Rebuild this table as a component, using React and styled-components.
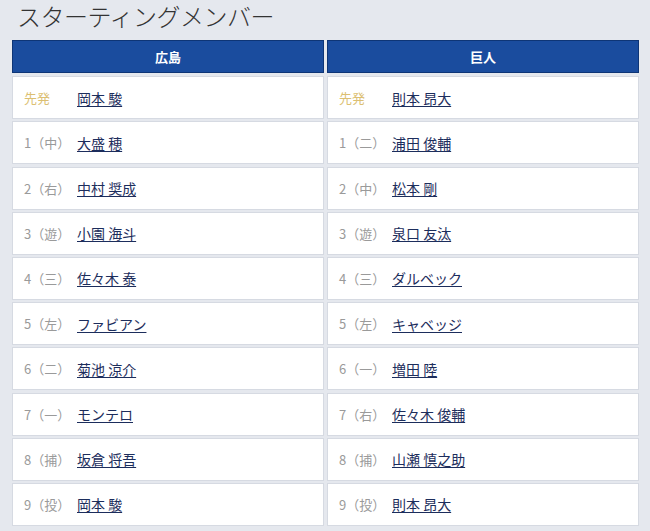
import React from 'react';
import styled, { createGlobalStyle } from 'styled-components';

const GlobalStyle = createGlobalStyle`
  body {
    margin: 0;
    background: #e5e8ee;
    font-family: "Noto Sans CJK JP", "Noto Sans", sans-serif;
  }
`

const Page = styled.div`
  width: 650px;
  height: 531px;
  overflow: hidden;
`

const Title = styled.h2`
  margin: 0;
  padding-left: 17px;
  height: 40px;
  line-height: 32px;
  font-size: 24px;
  font-weight: 300;
  color: #333;
  letter-spacing: -0.5px;
`

const Table = styled.div`
  margin-left: 12px;
  width: 627px;
  display: grid;
  grid-template-columns: 1fr 1fr;
  column-gap: 3px;
`

const Column = styled.div`
  display: flex;
  flex-direction: column;
  gap: 2.2px;
`

const Header = styled.div`
  height: 33px;
  margin-bottom: 1px;
  box-sizing: border-box;
  background: #1a4c9e;
  border: 1px solid #0e3576;
  color: #fff;
  font-size: 13px;
  font-weight: 700;
  display: flex;
  align-items: center;
  justify-content: center;
`

const Row = styled.div`
  height: 43px;
  box-sizing: border-box;
  background: #fff;
  border: 1px solid #d6dae2;
  display: flex;
  align-items: center;
  padding-left: 11px;
`

const Pos = styled.span`
  width: 53px;
  font-size: 13px;
  color: ${p => (p.starter ? '#dcbf72' : '#9a9a9a')};
`

const Name = styled.a`
  font-size: 14px;
  color: #1c2d5c;
  text-decoration: underline;
  text-underline-offset: 2px;
`

const teams = [
  {
    name: '広島',
    players: [
      ['先発', '岡本 駿'],
      ['1（中）', '大盛 穂'],
      ['2（右）', '中村 奨成'],
      ['3（遊）', '小園 海斗'],
      ['4（三）', '佐々木 泰'],
      ['5（左）', 'ファビアン'],
      ['6（二）', '菊池 涼介'],
      ['7（一）', 'モンテロ'],
      ['8（捕）', '坂倉 将吾'],
      ['9（投）', '岡本 駿'],
    ],
  },
  {
    name: '巨人',
    players: [
      ['先発', '則本 昂大'],
      ['1（二）', '浦田 俊輔'],
      ['2（中）', '松本 剛'],
      ['3（遊）', '泉口 友汰'],
      ['4（三）', 'ダルベック'],
      ['5（左）', 'キャベッジ'],
      ['6（一）', '増田 陸'],
      ['7（右）', '佐々木 俊輔'],
      ['8（捕）', '山瀬 慎之助'],
      ['9（投）', '則本 昂大'],
    ],
  },
]

const App = () => {
  return (
    <Page>
      <GlobalStyle />
      <Title>スターティングメンバー</Title>
      <Table>
        {teams.map((team) => (
          <Column key={team.name}>
            <Header>{team.name}</Header>
            {team.players.map(([pos, player], index) => (
              <Row key={`${team.name}${index}`}>
                <Pos starter={index === 0}>{pos}</Pos>
                <Name href="#">{player}</Name>
              </Row>
            ))}
          </Column>
        ))}
      </Table>
    </Page>
  )
};

export default App;
